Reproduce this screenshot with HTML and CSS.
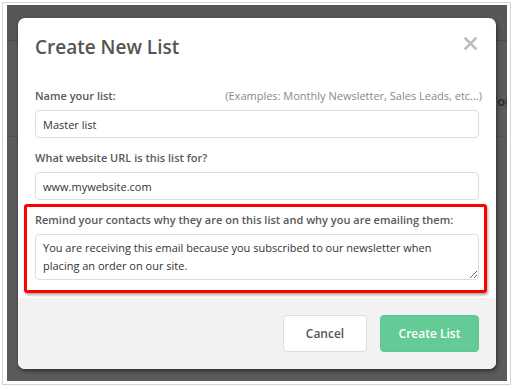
FILE: index.html
```html
<!DOCTYPE html>
<html lang="en">
<head>
  <meta charset="UTF-8" />
  <title>Create New List</title>
  <link rel="stylesheet" href="styles.css">
</head>
<body>
  <div class="frame">
    <div class="backdrop">
      <div class="page-behind">
        <div class="page-top"></div>
        <div class="page-row"><span class="page-text">Your</span></div>
        <div class="page-rest"></div>
      </div>

      <div class="modal">
        <div class="modal-header">
          <h2>Create New List</h2>
          <svg class="close" width="13" height="13" viewBox="0 0 13 13">
            <path d="M1.5 1.5 L11.5 11.5 M11.5 1.5 L1.5 11.5" stroke="#bdbdbd" stroke-width="2.6" stroke-linecap="square" fill="none"/>
          </svg>
        </div>
        <div class="modal-body">
          <div class="field">
            <div class="label-row">
              <label>Name your list:</label>
              <span class="hint">(Examples: Monthly Newsletter, Sales Leads, etc...)</span>
            </div>
            <input type="text" value="Master list" />
          </div>
          <div class="field">
            <div class="label-row">
              <label>What website URL is this list for?</label>
            </div>
            <input type="text" value="www.mywebsite.com" />
          </div>
          <div class="field highlight">
            <div class="label-row">
              <label>Remind your contacts why they are on this list and why you are emailing them:</label>
            </div>
            <textarea rows="2">You are receiving this email because you subscribed to our newsletter when placing an order on our site.</textarea>
          </div>
        </div>
        <div class="modal-footer">
          <button class="btn-cancel">Cancel</button>
          <button class="btn-create">Create List</button>
        </div>
      </div>
    </div>
  </div>
</body>
</html>
```

FILE: styles.css
```css
body {
  margin: 0;
  background: #fff;
  font-family: 'Open Sans', sans-serif;
}
.frame {
  margin: 2px 2px 0 2px;
  width: 500px;
  height: 376px;
  border: 1px solid #d4d4d4;
  padding: 2px 3px 3px 4px;
}
.backdrop {
  position: relative;
  height: 376px;
  background: #5b5b5b;
  overflow: hidden;
}
.page-top {
  height: 35px;
  background: #575757;
  border-bottom: 1px solid #4c4c4c;
}
.page-row {
  height: 96px;
  box-sizing: border-box;
  padding-bottom: 26px;
  border-bottom: 1px solid #525252;
  display: flex;
  justify-content: flex-end;
  align-items: flex-end;
}
.page-text {
  font-size: 13px;
  font-weight: 600;
  color: #1f2a33;
  margin-right: -12px;
}
.modal {
  position: absolute;
  left: 11px;
  top: 13px;
  width: 478px;
  height: 351px;
  background: #fff;
  border-radius: 7px;
  box-shadow: 1px 2px 4px rgba(0,0,0,0.5);
  overflow: hidden;
  display: flex;
  flex-direction: column;
}
.modal-header {
  display: flex;
  justify-content: space-between;
  align-items: flex-start;
  padding: 16px 19px 0 17px;
  height: 36px;
}
.modal-header h2 {
  margin: 0;
  font-size: 19px;
  line-height: 26px;
  font-weight: 600;
  color: #555;
}
.close {
  display: block;
  margin-top: 3px;
  cursor: pointer;
}
.modal-body {
  padding: 18px 17px 0 17px;
}
.field {
  margin-bottom: 12px;
}
.field + .highlight {
  margin-top: -8px;
}
.label-row {
  display: flex;
  justify-content: space-between;
  font-size: 11px;
  line-height: 16px;
  margin-bottom: 6px;
}
.label-row label {
  font-weight: 600;
  color: #595959;
}
.hint {
  color: #888;
  margin-right: -3px;
}
input, textarea {
  display: block;
  box-sizing: border-box;
  width: 100%;
  font-family: 'Open Sans', sans-serif;
  font-size: 11px;
  color: #333;
  border: 1px solid #ddd;
  border-radius: 4px;
  padding: 0 7px;
  background: #fff;
}
input {
  height: 28px;
}
textarea {
  height: 46px;
  padding: 4px 24px 4px 7px;
  line-height: 18px;
  resize: vertical;
}
.highlight {
  margin: 0 -8px 0 -11px;
  padding: 5px 5px 10px 8px;
  border: 3px solid #f00;
  border-radius: 3px;
  box-shadow: 1px 2px 3px rgba(0,0,0,0.35);
}
.modal-footer {
  margin-top: auto;
  height: 71px;
  background: #f2f2f2;
  display: flex;
  justify-content: flex-end;
  align-items: center;
  gap: 13px;
  padding: 0 17px;
}
button {
  height: 37px;
  border-radius: 4px;
  font-family: 'Open Sans', sans-serif;
  font-size: 12px;
  font-weight: 600;
  cursor: pointer;
}
.btn-cancel {
  width: 84px;
  background: #fff;
  border: 1px solid #ddd;
  color: #555;
}
.btn-create {
  width: 99px;
  background: #64ca96;
  border: 1px solid #5fc592;
  color: #fff;
}
```
